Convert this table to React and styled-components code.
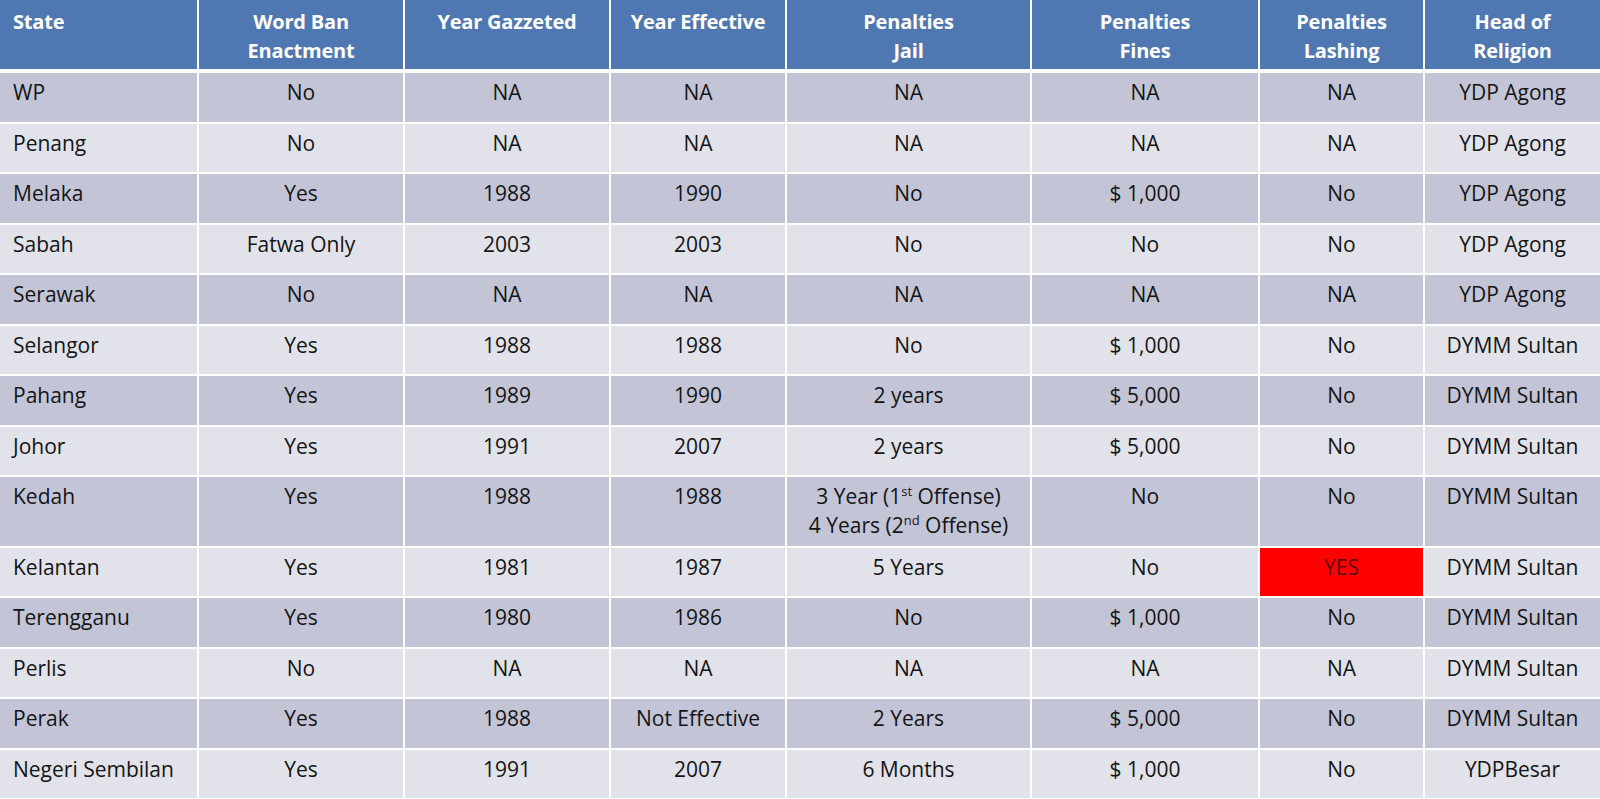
import React from "react";
import styled, { createGlobalStyle } from "styled-components";

const Global = createGlobalStyle`
  html, body { margin: 0; padding: 0; background: #ffffff; }
  body { font-family: "Open Sans", Lato, sans-serif; }
`;

const COLS = "197px 204px 204px 174px 243px 226px 163px 1fr";

const Table = styled.div`
  width: 1600px;
  height: 799px;
  background: #ffffff;
  display: flex;
  flex-direction: column;
  gap: 2px;
  overflow: hidden;
`;

const HeaderRow = styled.div`
  display: grid;
  grid-template-columns: ${COLS};
  column-gap: 2px;
  height: 69px;
  margin-bottom: 2px;
`;

const HeadCell = styled.div`
  background: #4f77b2;
  color: #ffffff;
  font-weight: 700;
  font-size: 20px;
  letter-spacing: -0.2px;
  line-height: 29px;
  padding-top: 6.5px;
  padding-left: ${(p) => (p.$left ? "13px" : "0")};
  text-align: ${(p) => (p.$left ? "left" : "center")};
  white-space: pre-line;
`;

const Row = styled.div`
  display: grid;
  grid-template-columns: ${COLS};
  column-gap: 2px;
  height: ${(p) => (p.$tall ? "68.5px" : "48.5px")};
  flex: none;
`;

const Cell = styled.div`
  background: ${(p) => (p.$alert ? "#ff0000" : p.$odd ? "#c3c5d7" : "#e2e3ea")};
  color: ${(p) => (p.$alert ? "#5e0a0a" : "#141414")};
  font-size: 21px;
  line-height: 29px;
  padding-top: 5.3px;
  padding-left: ${(p) => (p.$left ? "13px" : "0")};
  text-align: ${(p) => (p.$left ? "left" : "center")};
  white-space: nowrap;
`;

const Sup = styled.sup`
  font-size: 13px;
  line-height: 0;
  vertical-align: 8px;
`;

const headers = [
  "State",
  "Word Ban\nEnactment",
  "Year Gazzeted",
  "Year Effective",
  "Penalties\nJail",
  "Penalties\nFines",
  "Penalties\nLashing",
  "Head of\nReligion",
];

const kedahJail = (
  <>
    3 Year (1<Sup>st</Sup> Offense)
    <br />
    4 Years (2<Sup>nd</Sup> Offense)
  </>
);

const rows = [
  ["WP", "No", "NA", "NA", "NA", "NA", "NA", "YDP Agong"],
  ["Penang", "No", "NA", "NA", "NA", "NA", "NA", "YDP Agong"],
  ["Melaka", "Yes", "1988", "1990", "No", "$ 1,000", "No", "YDP Agong"],
  ["Sabah", "Fatwa Only", "2003", "2003", "No", "No", "No", "YDP Agong"],
  ["Serawak", "No", "NA", "NA", "NA", "NA", "NA", "YDP Agong"],
  ["Selangor", "Yes", "1988", "1988", "No", "$ 1,000", "No", "DYMM Sultan"],
  ["Pahang", "Yes", "1989", "1990", "2 years", "$ 5,000", "No", "DYMM Sultan"],
  ["Johor", "Yes", "1991", "2007", "2 years", "$ 5,000", "No", "DYMM Sultan"],
  ["Kedah", "Yes", "1988", "1988", kedahJail, "No", "No", "DYMM Sultan"],
  ["Kelantan", "Yes", "1981", "1987", "5 Years", "No", "YES", "DYMM Sultan"],
  ["Terengganu", "Yes", "1980", "1986", "No", "$ 1,000", "No", "DYMM Sultan"],
  ["Perlis", "No", "NA", "NA", "NA", "NA", "NA", "DYMM Sultan"],
  ["Perak", "Yes", "1988", "Not Effective", "2 Years", "$ 5,000", "No", "DYMM Sultan"],
  ["Negeri Sembilan", "Yes", "1991", "2007", "6 Months", "$ 1,000", "No", "YDPBesar"],
];

export default function App() {
  return (
    <>
      <Global />
      <Table>
        <HeaderRow>
          {headers.map((h, i) => (
            <HeadCell key={i} $left={i === 0}>
              {h}
            </HeadCell>
          ))}
        </HeaderRow>
        {rows.map((r, ri) => (
          <Row key={ri} $tall={r[0] === "Kedah"}>
            {r.map((c, ci) => (
              <Cell
                key={ci}
                $left={ci === 0}
                $odd={ri % 2 === 0}
                $alert={c === "YES"}
              >
                {c}
              </Cell>
            ))}
          </Row>
        ))}
      </Table>
    </>
  );
}
